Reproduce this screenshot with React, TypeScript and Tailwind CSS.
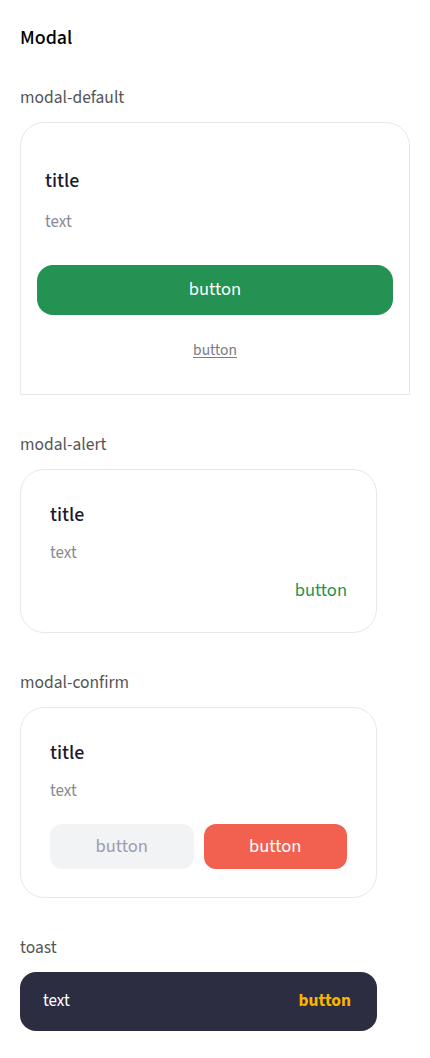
export default function App() {
  const font = { fontFamily: '"Source Sans 3", "Noto Sans", sans-serif' };
  return (
    <div className="min-h-screen bg-white px-5 pt-[24px] pb-6" style={font}>
      <h1 className="text-[20px] leading-[28px] font-medium text-black">Modal</h1>

      {/* modal-default */}
      <div className="mt-[34px] text-[17.5px] leading-[24px] text-[#555]">modal-default</div>
      <div className="mt-3 w-[390px] rounded-t-[24px] border border-[#e8e8e8] px-4 pt-[45px] pb-[34px]">
        <div className="px-2">
          <div className="text-[20px] leading-[26px] font-medium text-[#1a1a2e]">title</div>
          <div className="mt-[17px] text-[17px] leading-[22px] text-[#888a95]">text</div>
        </div>
        <button className="mt-8 flex h-[50px] w-full items-center justify-center rounded-[16px] bg-[#249252] text-[18.5px] font-normal text-white">
          button
        </button>
        <div className="mt-[25px] flex justify-center">
          <span className="text-[15.5px] leading-[20px] text-[#7a7a88] underline underline-offset-2">button</span>
        </div>
      </div>

      {/* modal-alert */}
      <div className="mt-[38px] text-[17.5px] leading-[24px] text-[#555]">modal-alert</div>
      <div className="mt-3 w-[357px] rounded-[24px] border border-[#e8e8e8] px-[29px] pt-[32px] pb-[30px]">
        <div className="text-[20px] leading-[26px] font-medium text-[#1a1a2e]">title</div>
        <div className="mt-[14px] text-[17px] leading-[22px] text-[#888a95]">text</div>
        <div className="mt-[14px] flex justify-end">
          <span className="text-[18.5px] leading-[24px] font-normal text-[#249252]">button</span>
        </div>
      </div>

      {/* modal-confirm */}
      <div className="mt-[38px] text-[17.5px] leading-[24px] text-[#555]">modal-confirm</div>
      <div className="mt-3 w-[357px] rounded-[24px] border border-[#e8e8e8] px-[29px] pt-[32px] pb-[28px]">
        <div className="text-[20px] leading-[26px] font-medium text-[#1a1a2e]">title</div>
        <div className="mt-[14px] text-[17px] leading-[22px] text-[#888a95]">text</div>
        <div className="mt-[22px] flex gap-[10px]">
          <button className="flex h-[45px] flex-1 items-center justify-center rounded-[12px] bg-[#f2f3f5] text-[18.5px] font-normal text-[#9d9dab]">
            button
          </button>
          <button className="flex h-[45px] flex-1 items-center justify-center rounded-[12px] bg-[#f26150] text-[18.5px] font-normal text-white">
            button
          </button>
        </div>
      </div>

      {/* toast */}
      <div className="mt-[38px] text-[17.5px] leading-[24px] text-[#555]">toast</div>
      <div className="mt-3 flex h-[59px] w-[357px] items-center justify-between rounded-[16px] bg-[#2d2d42] pl-[23px] pr-[26px]">
        <span className="text-[17px] text-white">text</span>
        <span className="text-[17.5px] font-bold text-[#f8b500]">button</span>
      </div>
    </div>
  );
}
